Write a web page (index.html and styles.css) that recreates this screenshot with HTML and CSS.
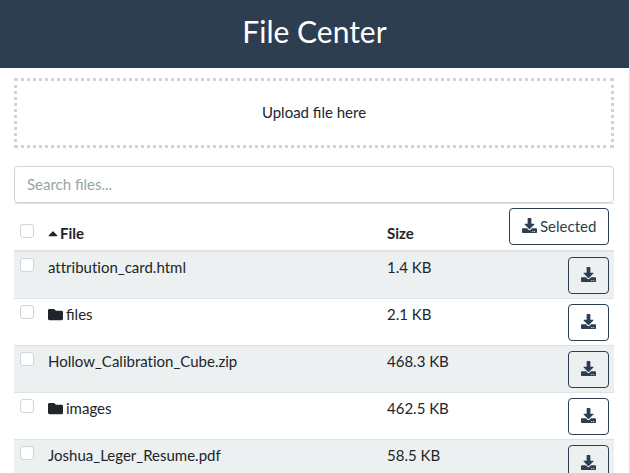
FILE: index.html
```
<!DOCTYPE html>
<html lang="en">
<head>
<meta charset="utf-8">
<meta name="viewport" content="width=device-width, initial-scale=1">
<title>File Center</title>
<link rel="stylesheet" href="styles.css">
</head>
<body>
<svg class="sprite" aria-hidden="true">
  <symbol id="download" viewBox="0 0 512 512"><path d="M216 0h80c13.3 0 24 10.7 24 24v168h87.7c17.8 0 26.7 21.5 14.1 34.1L269.7 378.3c-7.5 7.5-19.8 7.5-27.3 0L90.1 226.1c-12.6-12.6-3.7-34.1 14.1-34.1H192V24c0-13.3 10.7-24 24-24zm296 376v112c0 13.3-10.7 24-24 24H24c-13.3 0-24-10.7-24-24V376c0-13.3 10.7-24 24-24h146.7l49 49c20.1 20.1 52.5 20.1 72.6 0l49-49H488c13.3 0 24 10.7 24 24zm-124 88c0-11-9-20-20-20s-20 9-20 20 9 20 20 20 20-9 20-20zm64 0c0-11-9-20-20-20s-20 9-20 20 9 20 20 20 20-9 20-20z"/></symbol>
  <symbol id="folder" viewBox="0 0 512 512"><path d="M464 128H272l-64-64H48C21.49 64 0 85.49 0 112v288c0 26.51 21.49 48 48 48h416c26.51 0 48-21.49 48-48V176c0-26.51-21.49-48-48-48z"/></symbol>
  <symbol id="caret-up" viewBox="0 0 320 512"><path d="M288.662 352H31.338c-17.818 0-26.741-21.543-14.142-34.142l128.662-128.662c7.81-7.81 20.474-7.81 28.284 0l128.662 128.662c12.6 12.599 3.676 34.142-14.142 34.142z"/></symbol>
</svg>
<header class="banner"><h1>File Center</h1></header>
<main class="content">
  <div class="dropzone">Upload file here</div>
  <input class="search" type="search" placeholder="Search files..." aria-label="Search files">
  <table class="files">
    <colgroup><col class="col-check"><col class="col-name"><col class="col-size"><col class="col-action"></colgroup>
    <thead>
      <tr>
        <th><input class="check" type="checkbox" aria-label="Select all files"></th>
        <th aria-sort="ascending"><svg class="icon icon-caret"><use href="#caret-up"/></svg><span class="heading">File</span></th>
        <th>Size</th>
        <th class="action"><button class="btn" type="button"><svg class="icon"><use href="#download"/></svg>Selected</button></th>
      </tr>
    </thead>
    <tbody>
      <tr>
        <td><input class="check" type="checkbox" aria-label="Select attribution_card.html"></td>
        <td class="filename">attribution_card.html</td>
        <td>1.4 KB</td>
        <td class="action"><button class="btn" type="button" aria-label="Download attribution_card.html"><svg class="icon"><use href="#download"/></svg></button></td>
      </tr>
      <tr>
        <td><input class="check" type="checkbox" aria-label="Select files"></td>
        <td><svg class="icon icon-folder"><use href="#folder"/></svg>files</td>
        <td>2.1 KB</td>
        <td class="action"><button class="btn" type="button" aria-label="Download files"><svg class="icon"><use href="#download"/></svg></button></td>
      </tr>
      <tr>
        <td><input class="check" type="checkbox" aria-label="Select Hollow_Calibration_Cube.zip"></td>
        <td class="filename">Hollow_Calibration_Cube.zip</td>
        <td>468.3 KB</td>
        <td class="action"><button class="btn" type="button" aria-label="Download Hollow_Calibration_Cube.zip"><svg class="icon"><use href="#download"/></svg></button></td>
      </tr>
      <tr>
        <td><input class="check" type="checkbox" aria-label="Select images"></td>
        <td><svg class="icon icon-folder"><use href="#folder"/></svg>images</td>
        <td>462.5 KB</td>
        <td class="action"><button class="btn" type="button" aria-label="Download images"><svg class="icon"><use href="#download"/></svg></button></td>
      </tr>
      <tr>
        <td><input class="check" type="checkbox" aria-label="Select Joshua_Leger_Resume.pdf"></td>
        <td class="filename">Joshua_Leger_Resume.pdf</td>
        <td>58.5 KB</td>
        <td class="action"><button class="btn" type="button" aria-label="Download Joshua_Leger_Resume.pdf"><svg class="icon"><use href="#download"/></svg></button></td>
      </tr>
    </tbody>
  </table>
</main>
</body>
</html>
```
FILE: styles.css
```
*, *::before, *::after { box-sizing: border-box; }

html { scrollbar-width: none; }

body {
  margin: 0;
  min-height: 100vh;
  border-right: 1px solid #dee2e6;
  background: #fff;
  color: #212529;
  font: 15px/20px Lato, sans-serif;
}

.sprite { display: none; }

.banner {
  padding: 12px 16px 18px;
  background: #2c3e50;
  color: #fff;
  text-align: center;
}

.banner h1 {
  margin: 0;
  font-size: 30px;
  line-height: 38px;
  font-weight: 400;
}

.content { padding: 10px 15px 16px 14px; }

.dropzone {
  margin-bottom: 18px;
  padding: 21px 21px 23px;
  border: 3px dotted #d3d3d3;
  text-align: center;
}

.search {
  display: block;
  width: 100%;
  height: 37px;
  padding: 0 12px 2px;
  border: 1px solid #ced4da;
  border-radius: 4px;
  background: #fff;
  color: #7b8a8b;
  font: inherit;
  appearance: none;
}

.search::placeholder { color: #95a5a6; opacity: 1; }

.files {
  width: 100%;
  table-layout: fixed;
  border-collapse: separate;
  border-spacing: 0;
}

.col-check { width: 29px; }
.col-name { width: 56.5%; }
.col-action { width: 110px; }

.files th,
.files td {
  padding: 5px 5px 4px;
  border-top: 1px solid #dee2e6;
  text-align: left;
  vertical-align: top;
}

.files th {
  padding: 4px 5px 5px;
  border-bottom: 2px solid #dee2e6;
  font-weight: 700;
  line-height: 24px;
  vertical-align: bottom;
}

.files tbody tr:first-child td { border-top: 0; }
.files tbody tr:nth-child(odd) { background: #ecf0f1; }

.files .action { text-align: right; }

.filename { font-variant-ligatures: none; }

.check {
  display: block;
  width: 14px;
  height: 14px;
  margin: 1px 0 7px 1px;
  border: 1px solid #ced4da;
  border-radius: 3px;
  background: #fff;
  appearance: none;
}

.check:checked { background: #2c3e50; }

.btn {
  display: inline-flex;
  align-items: center;
  gap: 3px;
  height: 37px;
  padding: 0 12px 2px;
  border: 1px solid #2c3e50;
  border-radius: 4px;
  background: transparent;
  color: #2c3e50;
  font: inherit;
  font-weight: 400;
  vertical-align: top;
}

.icon {
  width: 15px;
  height: 15px;
  fill: currentColor;
}

.icon-folder,
.icon-caret {
  margin-right: 3px;
  vertical-align: -2px;
}

.icon-caret {
  width: 10px;
  margin-right: 2px;
}
```
